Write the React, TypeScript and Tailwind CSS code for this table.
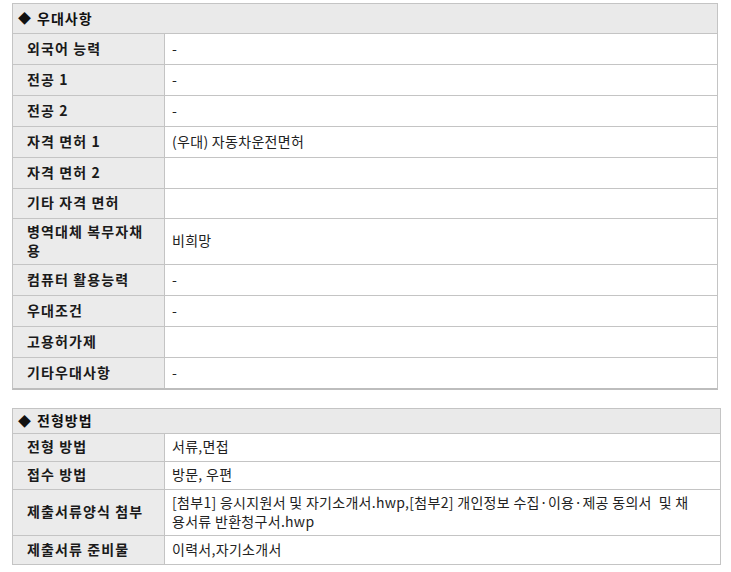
import React from "react";

const font = { fontFamily: '"Noto Sans CJK KR", "Noto Sans", sans-serif' };

type Row = { label: React.ReactNode; value: React.ReactNode; h: string };

function Section({
  title,
  rows,
  widthCls,
  headerH,
  bottomCls,
}: {
  title: string;
  rows: Row[];
  widthCls: string;
  headerH: string;
  bottomCls: string;
}) {
  return (
    <div className={`${widthCls} border-l border-r border-t border-[#c4c4c4] ${bottomCls}`}>
      <div className={`${headerH} flex items-center bg-[#eaeaea] pl-[5px] pb-[1px] text-[14px] font-bold tracking-[1px] text-[#111] border-b border-[#c4c4c4]`}>
        <span className="mr-[5px] text-[13px]">◆</span>
        {title}
      </div>
      {rows.map((r, i) => (
        <div
          key={i}
          className={`flex ${r.h} ${i < rows.length - 1 ? "border-b border-[#c4c4c4]" : ""}`}
        >
          <div className="w-[152px] shrink-0 bg-[#ebebeb] border-r border-[#c4c4c4] flex items-center pl-[14px] pr-[6px] pb-[2px] text-[14px] font-bold tracking-[1.1px] leading-[19px] text-[#1a1a1a]">
            <span>{r.label}</span>
          </div>
          <div className="flex-1 flex items-center pl-[7px] pb-[2px] text-[14px] tracking-[0.3px] leading-[19px] text-[#222]">
            {r.value}
          </div>
        </div>
      ))}
    </div>
  );
}

export default function App() {
  const r1: Row[] = [
    { label: "외국어 능력", value: "-", h: "h-[31px]" },
    { label: "전공 1", value: "-", h: "h-[31px]" },
    { label: "전공 2", value: "-", h: "h-[31px]" },
    { label: "자격 면허 1", value: "(우대) 자동차운전면허", h: "h-[31px]" },
    { label: "자격 면허 2", value: "", h: "h-[31px]" },
    { label: "기타 자격 면허", value: "", h: "h-[30px]" },
    {
      label: (
        <>
          병역대체 복무자채
          <br />용
        </>
      ),
      value: "비희망",
      h: "h-[46px]",
    },
    { label: "컴퓨터 활용능력", value: "-", h: "h-[31px]" },
    { label: "우대조건", value: "-", h: "h-[31px]" },
    { label: "고용허가제", value: "", h: "h-[31px]" },
    { label: "기타우대사항", value: "-", h: "h-[30px]" },
  ];
  const r2: Row[] = [
    { label: "전형 방법", value: "서류,면접", h: "h-[28px]" },
    { label: "접수 방법", value: "방문, 우편", h: "h-[28px]" },
    {
      label: "제출서류양식 첨부",
      value: (
        <div className="flex flex-col">
          <span className="whitespace-nowrap">
            [첨부1] 응시지원서 및 자기소개서.hwp,[첨부2] 개인정보 수집·이용·제공 동의서&nbsp; 및 채
          </span>
          <span className="whitespace-nowrap">용서류 반환청구서.hwp</span>
        </div>
      ),
      h: "h-[46px]",
    },
    { label: "제출서류 준비물", value: "이력서,자기소개서", h: "h-[28px]" },
  ];
  return (
    <div className="min-h-[572px] w-[731px] bg-white pl-[12px] pt-[3px]" style={font}>
      <Section
        title="우대사항"
        rows={r1}
        widthCls="w-[706px]"
        headerH="h-[30px]"
        bottomCls="border-b-2 border-b-[#bdbdbd]"
      />
      <div className="h-[18px]" />
      <Section
        title="전형방법"
        rows={r2}
        widthCls="w-[709px]"
        headerH="h-[25px]"
        bottomCls="border-b border-b-[#c4c4c4]"
      />
    </div>
  );
}
